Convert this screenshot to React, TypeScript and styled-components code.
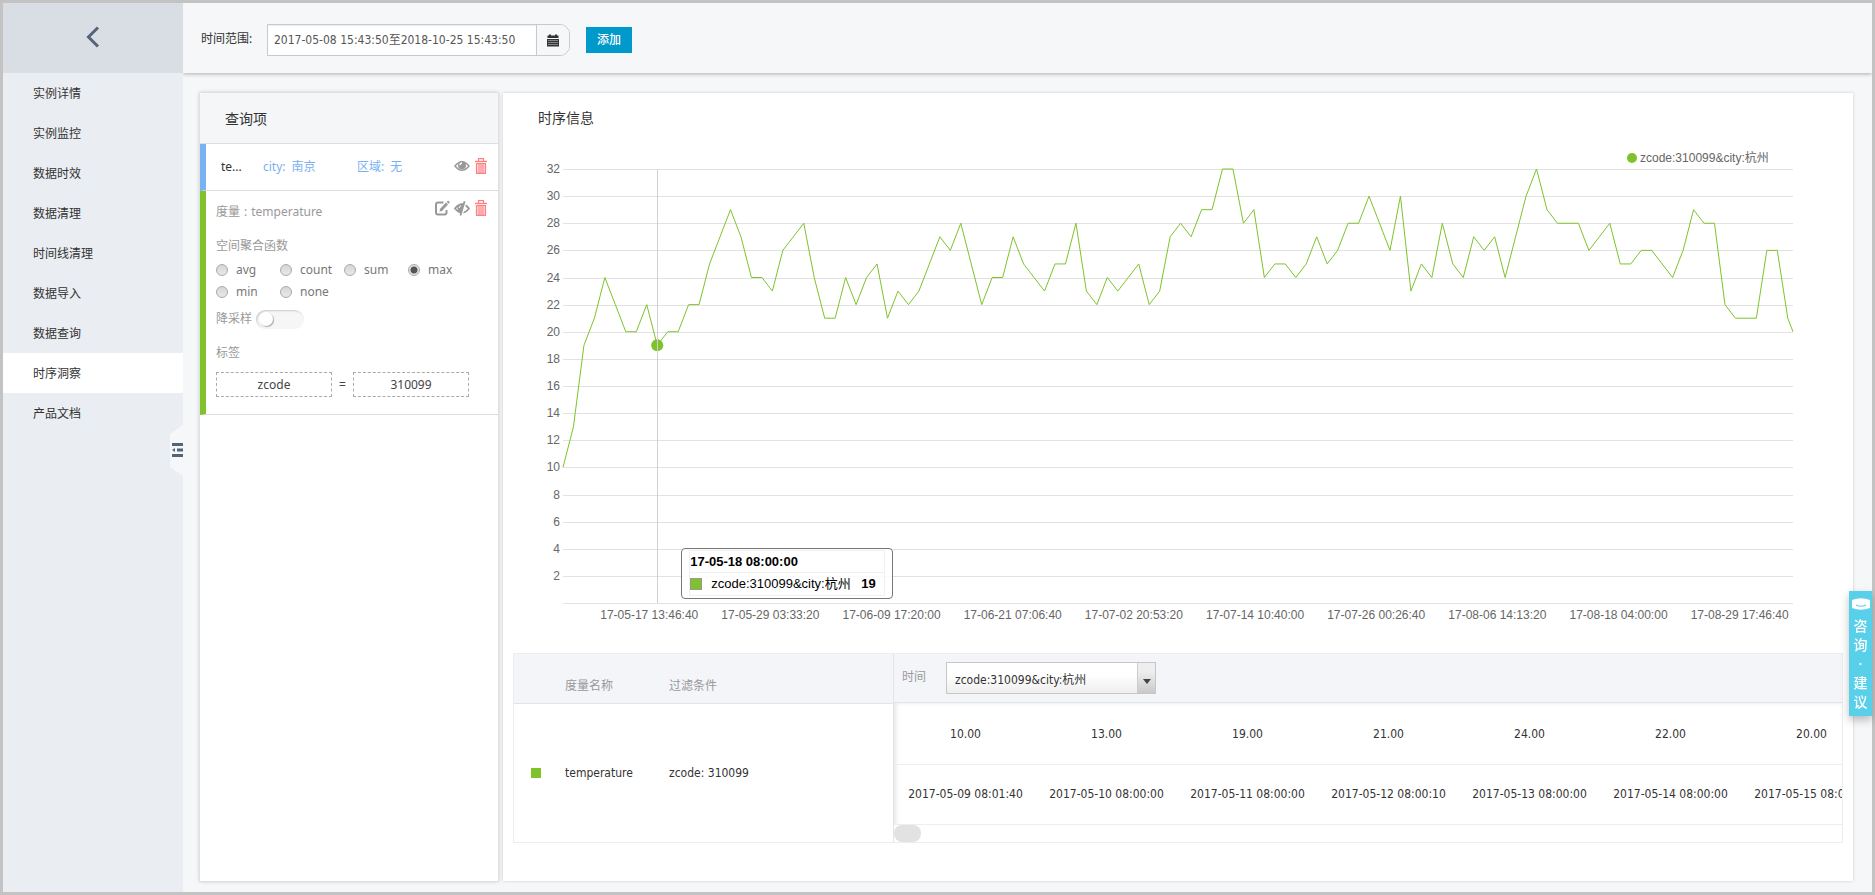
import React, { useLayoutEffect, useRef, useState } from "react";
import styled, { createGlobalStyle } from "styled-components";

const cjk = `"Noto Sans CJK SC", sans-serif`;
const fontBody = `"Noto Sans", ${cjk}`;
const fontData = `"DejaVu Sans Condensed", ${cjk}`;
const fontChart = `"Liberation Sans", ${cjk}`;
const green = "#7fc22c";

const GlobalStyle = createGlobalStyle`
  *, *::before, *::after { box-sizing: border-box; }
  body { margin: 0; background: #f5f7f9; font: 12px/20px ${fontBody}; color: #333; }
  button, input, select { font: inherit; color: inherit; margin: 0; }
  a { color: inherit; text-decoration: none; }
`;

/* ---------- page frame ---------- */

const Page = styled.div`
  display: flex;
  min-height: 100vh;
  border: 3px solid #c3c3c3;
  background: #f5f7f9;
`;

const Sidebar = styled.nav`
  position: relative;
  flex: 0 0 180px;
  background: #eaedf1;
`;

const BackButton = styled.button`
  display: flex;
  align-items: center;
  justify-content: center;
  width: 100%;
  height: 70px;
  padding: 0 0 2px;
  border: 0;
  background: #d9dee5;
`;

const NavList = styled.ul`
  margin: 0;
  padding: 0;
  list-style: none;
`;

const NavLink = styled.a<{ $active?: boolean }>`
  display: block;
  padding: 2px 30px 0;
  line-height: 38px;
  background: ${(p) => (p.$active ? "#fff" : "transparent")};
`;

const CollapseTab = styled.button`
  position: absolute;
  right: 0;
  top: 422px;
  width: 13px;
  height: 51px;
  padding: 0;
  border: 0;
  background: none;
  svg { display: block; }
`;

const Main = styled.main`
  flex: 1;
  min-width: 0;
  display: flex;
  flex-direction: column;
`;

const Toolbar = styled.form`
  display: flex;
  align-items: center;
  height: 70px;
  padding: 4px 17px 0 18px;
  background: #f5f7f9;
  box-shadow: 0 1px 4px rgba(0, 0, 0, 0.3);
  clip-path: inset(0 0 -8px 0);
`;

const RangeLabel = styled.label`
  width: 66px;
  padding-bottom: 2px;
`;

const RangeGroup = styled.div`
  display: flex;
  width: 303px;
  height: 32px;
  margin-right: 16px;
  border: 1px solid #c8c9cb;
  border-radius: 0 10px 10px 0;
  overflow: hidden;
`;

const RangeInput = styled.input`
  flex: 1;
  min-width: 0;
  padding: 0 6px;
  border: 0;
  background: #fff;
  box-shadow: inset 0 1px 1px rgba(0, 0, 0, 0.08);
  font-family: ${fontData};
  color: #555;
`;

const RangeButton = styled.button`
  display: flex;
  align-items: center;
  justify-content: center;
  width: 33px;
  padding: 0;
  border: 0;
  border-left: 1px solid #c8c9cb;
  background: #f5f7f9;
`;

const AddButton = styled.button`
  width: 46px;
  height: 26px;
  padding: 0;
  border: 0;
  background: #0099cc;
  color: #fff;
  font-weight: 500;
`;

const Content = styled.div`
  flex: 1;
  display: flex;
  gap: 5px;
  padding: 20px 19px 11px 17px;
`;

/* ---------- query panel ---------- */

const QueryPanel = styled.section`
  flex: 0 0 298px;
  background: #fff;
  box-shadow: 0 0 0 1px #dfe0e2, 0 0 4px rgba(0, 0, 0, 0.28);
`;

const QueryTitle = styled.h2`
  margin: 0;
  padding: 1px 25px 0;
  border-bottom: 1px solid #dcdfe2;
  background: #f5f6f8;
  font-size: 14px;
  font-weight: 400;
  line-height: 49px;
`;

const QueryRow = styled.article`
  display: flex;
  align-items: center;
  height: 47px;
  padding: 0 10px 0 15px;
  border-left: 6px solid #7ab1f1;
  border-bottom: 1px solid #dcdcdc;
`;

const QueryName = styled.span`
  width: 42px;
`;

const QueryTag = styled.span`
  display: flex;
  gap: 6px;
  width: 94px;
  color: #7ab1f1;
`;

const Actions = styled.div`
  display: flex;
  gap: 6px;
  margin-left: auto;
  padding-bottom: 3px;
`;

const IconButton = styled.button`
  display: flex;
  width: 14px;
  height: 16px;
  padding: 0;
  border: 0;
  background: none;
  svg { flex: none; }
`;

const QueryDetail = styled.article`
  padding: 9px 10px 17px;
  border-left: 6px solid ${green};
  border-bottom: 1px solid #dcdcdc;
  color: #999;
`;

const DetailHead = styled.header`
  display: flex;
  align-items: flex-start;
`;

const Metric = styled.span`
  display: flex;
  gap: 4px;
  padding-top: 2px;
`;

const Radios = styled.fieldset`
  margin: 14px 0 0;
  padding: 0;
  border: 0;
  min-width: 0;
`;

const RadioLegend = styled.legend`
  padding: 0 0 3px;
`;

const RadioGrid = styled.div`
  display: grid;
  grid-template-columns: repeat(4, 64px);
  grid-auto-rows: 22px;
`;

const RadioLabel = styled.label`
  display: flex;
  align-items: center;
  gap: 8px;
  color: #777;
`;

const Radio = styled.input`
  appearance: none;
  width: 12px;
  height: 12px;
  border: 1px solid #aaa;
  border-radius: 50%;
  background: linear-gradient(#d6d6d6, #e8e8e8);
  &:checked {
    background: radial-gradient(circle, #555 0 3px, #e4e4e4 4px);
  }
`;

const SwitchRow = styled.label`
  display: flex;
  align-items: center;
  gap: 4px;
  margin-top: 6px;
`;

const Switch = styled.input`
  appearance: none;
  display: flex;
  align-items: center;
  width: 48px;
  height: 19px;
  padding-left: 3px;
  border-radius: 10px;
  background: #f6f6f6;
  box-shadow: inset 1px 1px 2px rgba(0, 0, 0, 0.18);
  &::before {
    content: "";
    width: 14px;
    height: 14px;
    border-radius: 50%;
    background: #fff;
    box-shadow: 1px 1px 1px rgba(0, 0, 0, 0.3);
  }
  &:checked::before { margin-left: 27px; }
`;

const TagTitle = styled.p`
  margin: 14px 0 9px;
`;

const TagPair = styled.div`
  display: flex;
  align-items: center;
  color: #444;
`;

const TagInput = styled.input`
  width: 116px;
  height: 25px;
  padding: 0;
  border: 1px dashed #aaa;
  background: #fff;
  text-align: center;
`;

const Equals = styled.span`
  width: 21px;
  text-align: center;
`;

/* ---------- chart panel ---------- */

const ChartPanel = styled.section`
  flex: 1;
  min-width: 0;
  padding: 0 10px;
  background: #fff;
  box-shadow: 0 0 3px rgba(0, 0, 0, 0.18);
`;

const ChartTitle = styled.h2`
  margin: 0;
  padding: 15px 25px 12px;
  font-size: 14px;
  font-weight: 400;
  line-height: 20px;
`;

const ChartBox = styled.figure`
  position: relative;
  margin: 0;
  font-family: ${fontChart};
  svg { display: block; }
`;

const Tooltip = styled.div`
  position: absolute;
  top: 408px;
  width: 212px;
  padding: 1px 7px 2px;
  border: 1px solid #777;
  border-radius: 4px;
  background: rgba(255, 255, 255, 0.85);
  font-size: 13px;
  color: #000;
`;

const TipRow = styled.div`
  display: flex;
  align-items: center;
  width: 196px;
  height: 23px;
  border: 1px solid #f0f0f0;
  & + & { border-top: 0; }
`;

const TipSwatch = styled.span`
  width: 12px;
  height: 12px;
  margin-right: 9px;
  border: 1px solid #999;
  background: ${green};
`;

const TipName = styled.span`
  width: 150px;
`;

/* ---------- data area ---------- */

const line = "#e0e5ea";

const DataArea = styled.div`
  display: grid;
  grid-template-columns: 380px minmax(0, 1fr);
  margin-top: 13px;
  border: 1px solid #ebedf0;
  font-family: ${fontData};
`;

const MetricTable = styled.table`
  width: 100%;
  height: 100%;
  table-layout: fixed;
  border-collapse: collapse;
  border-right: 1px solid ${line};
  th, td { padding: 0; text-align: left; font-weight: 400; }
  th { height: 49px; padding-top: 16px; background: #f4f5f9; border-bottom: 1px solid ${line}; color: #999; }
`;

const MarkCol = styled.col`
  width: 51px;
`;

const NameCol = styled.col`
  width: 104px;
`;

const Swatch = styled.span`
  display: block;
  width: 10px;
  height: 10px;
  margin-left: 17px;
  background: ${green};
`;

const SeriesHead = styled.div`
  display: flex;
  align-items: flex-start;
  height: 49px;
  padding: 8px;
  border-bottom: 1px solid ${line};
  background: #f4f5f9;
`;

const SeriesLabel = styled.label`
  width: 44px;
  padding-top: 5px;
  color: #999;
`;

const SelectBox = styled.span`
  position: relative;
  width: 210px;
  height: 32px;
`;

const SeriesSelect = styled.select`
  appearance: none;
  display: block;
  width: 100%;
  height: 100%;
  padding: 3px 8px 0;
  border: 1px solid #c6c6c6;
  border-radius: 0;
  background: linear-gradient(#fff 40%, #eee);
`;

const SelectArrow = styled.span`
  position: absolute;
  right: 1px;
  top: 1px;
  bottom: 1px;
  display: flex;
  align-items: center;
  justify-content: center;
  width: 18px;
  padding-top: 6px;
  border-left: 1px solid #ccc;
  background: linear-gradient(#eee 30%, #c9c9c9);
  pointer-events: none;
`;

const SeriesScroll = styled.div`
  padding: 1px 0 0 1px;
  overflow: hidden;
  box-shadow: inset 4px 2px 4px -2px rgba(0, 0, 0, 0.1);
`;

const SeriesTable = styled.table`
  width: max-content;
  table-layout: fixed;
  border-collapse: collapse;
  td {
    width: 141px;
    height: 60px;
    padding: 0;
    border-bottom: 1px solid #eee;
    text-align: center;
    white-space: nowrap;
  }
`;

const Track = styled.div`
  height: 17px;
`;

const Thumb = styled.div`
  width: 27px;
  height: 17px;
  border-radius: 8px;
  background: #e2e2e2;
`;

const Feedback = styled.a`
  position: fixed;
  right: 3px;
  top: 591px;
  display: flex;
  flex-direction: column;
  align-items: center;
  width: 23px;
  height: 125px;
  padding: 7px 0 0;
  background: #58d0ea;
  box-shadow: 0 4px 8px rgba(0, 0, 0, 0.25);
  color: #fff;
  font-size: 14px;
  font-weight: 500;
  line-height: 19px;
  svg { flex: none; margin-bottom: 6px; }
`;

/* ---------- icons ---------- */

const EyeIcon = () => (
  <svg width="16" height="16" viewBox="0 0 16 16">
    <path d="M1 8Q8 -0.500 15 8Q8 16.500 1 8Z" fill="#fff" stroke="#999" strokeWidth="1.5" />
    <circle cx="8" cy="7.200" r="4" fill="#999" />
    <path d="M5.800 7.200Q6 5.200 8 5" fill="none" stroke="#fff" strokeWidth="1.300" />
  </svg>
);

const EyeOffIcon = () => (
  <svg width="16" height="16" viewBox="0 0 16 16">
    <path d="M1 8.500Q8 0 15 8.500Q8 17 1 8.500Z" fill="#fff" stroke="#999" strokeWidth="1.800" />
    <path d="M9.500 3.800A4.500 4.600 0 0 0 6.800 13Z" fill="#999" />
    <path d="M5.200 8Q5.400 6.200 7 5.600" fill="none" stroke="#fff" strokeWidth="1" />
    <path d="M12 1L7.600 16" stroke="#fff" strokeWidth="1.600" />
    <path d="M10.600 1.200L6.400 15.600" stroke="#999" strokeWidth="1.800" />
  </svg>
);

const EditIcon = () => (
  <svg width="16" height="16" viewBox="0 0 16 16" fill="none" stroke="#999" strokeWidth="2">
    <path d="M9.500 2.500H4Q2 2.500 2 4.500V12.500Q2 14.500 4 14.500H10.500Q12.500 14.500 12.500 12.500V10" />
    <path d="M6.500 10.500L13 3.500" strokeWidth="2.800" />
    <path d="M13.600 2.800L15 1.400" strokeWidth="2.600" />
    <path d="M5.200 12L7 8.800L8.400 10.200Z" fill="#999" stroke="none" />
  </svg>
);

const TrashIcon = () => (
  <svg width="14" height="16" viewBox="0 0 14 16" fill="none" stroke="#ff8080">
    <path d="M1 3.500H13" strokeWidth="1.400" />
    <path d="M4.500 3V0.700H9.500V3" strokeWidth="1.200" />
    <path d="M2.500 5.500V15.300H11.500V5.500Z" fill="#ffd5df" strokeWidth="1.200" />
    <path d="M5 6V15M7 6V15M9 6V15" strokeWidth="1" />
  </svg>
);

const CalendarIcon = () => (
  <svg width="12" height="13" viewBox="0 0 12 13">
    <path d="M0.500 1.500H2V0.500H4V1.500H8V0.500H10V1.500H11.500V4H0.500Z" fill="#333" />
    <path d="M0 5H12V12.500H0Z" fill="#333" />
    <path d="M1 6.500H11M1 8.500H11M1 10.500H11" stroke="#999" strokeWidth="0.800" />
  </svg>
);

/* ---------- chart ---------- */

const values = [
  10, 13, 19, 21, 24, 22, 20, 20, 22, 19, 20, 20, 22, 22, 25, 27, 29, 27, 24, 24,
  23, 26, 27, 28, 24, 21, 21, 24, 22, 24, 25, 21, 23, 22, 23, 25, 27, 26, 28, 25,
  22, 24, 24, 27, 25, 24, 23, 25, 25, 28, 23, 22, 24, 23, 24, 25, 22, 23, 27, 28,
  27, 29, 29, 32, 32, 28, 29, 24, 25, 25, 24, 25, 27, 25, 26, 28, 28, 30, 28, 26,
  30, 23, 25, 24, 28, 25, 24, 27, 26, 27, 24, 27, 30, 32, 29, 28, 28, 28, 26, 27,
  28, 25, 25, 26, 26, 25, 24, 26, 29, 28, 28, 22, 21, 21, 21, 26, 26, 21,
];
const lastValue = 20;
const totalDays = 117.5;

const ticks = [
  "17-05-17 13:46:40", "17-05-29 03:33:20", "17-06-09 17:20:00", "17-06-21 07:06:40",
  "17-07-02 20:53:20", "17-07-14 10:40:00", "17-07-26 00:26:40", "17-08-06 14:13:20",
  "17-08-18 04:00:00", "17-08-29 17:46:40",
];
const firstTickDay = 8.24;
const tickDays = 11.574;

const plot = { left: 50, right: 50, top: 29, bottom: 463, height: 500, max: 32 };
const seriesName = "zcode:310099&city:杭州";
const hovered = 9;

function TimeChart() {
  const box = useRef<HTMLElement>(null);
  const [width, setWidth] = useState(1330);

  useLayoutEffect(() => {
    const el = box.current;
    if (!el) return;
    const measure = () => setWidth(el.clientWidth);
    measure();
    const observer = new ResizeObserver(measure);
    observer.observe(el);
    return () => observer.disconnect();
  }, []);

  const right = width - plot.right;
  const x = (day: number) => plot.left + (day / totalDays) * (right - plot.left);
  const y = (v: number) => plot.bottom - (v / plot.max) * (plot.bottom - plot.top);
  const points = values.map((v, i) => `${x(i)},${y(v)}`).concat(`${x(totalDays)},${y(lastValue)}`);
  const grid = Array.from({ length: 17 }, (_, i) => i * 2);

  return (
    <ChartBox ref={box}>
      <svg width={width} height={plot.height} fontSize="12" fill="#666">
        {grid.map((v) => (
          <g key={v}>
            <path d={`M${plot.left} ${Math.round(y(v)) + 0.5}H${right}`} stroke="#e2e2e2" />
            {v > 0 && <text x={plot.left - 3} y={y(v) + 4} textAnchor="end">{v}</text>}
          </g>
        ))}
        {ticks.map((t, i) => (
          <text key={t} x={x(firstTickDay + i * tickDays)} y={479} textAnchor="middle">{t}</text>
        ))}
        <polyline points={points.join(" ")} fill="none" stroke={green} strokeWidth="1" />
        <circle cx={x(hovered)} cy={y(values[hovered])} r="6" fill={green} />
        <path d={`M${Math.floor(x(hovered)) + 0.5} ${plot.top}V${plot.bottom}`} stroke="#d0d0d0" />
        <circle cx={right - 161} cy={18} r="5" fill={green} />
        <text x={right - 153} y={22}>{seriesName}</text>
      </svg>
      <Tooltip style={{ left: x(hovered) + 24 }}>
        <TipRow><strong>17-05-18 08:00:00</strong></TipRow>
        <TipRow>
          <TipSwatch />
          <TipName>{seriesName}</TipName>
          <strong>19</strong>
        </TipRow>
      </Tooltip>
    </ChartBox>
  );
}

/* ---------- page ---------- */

const navItems = [
  "实例详情", "实例监控", "数据时效", "数据清理", "时间线清理",
  "数据导入", "数据查询", "时序洞察", "产品文档",
];

const aggregations = ["avg", "count", "sum", "max", "min", "none"];

const samples = [
  ["10.00", "2017-05-09 08:01:40"],
  ["13.00", "2017-05-10 08:00:00"],
  ["19.00", "2017-05-11 08:00:00"],
  ["21.00", "2017-05-12 08:00:10"],
  ["24.00", "2017-05-13 08:00:00"],
  ["22.00", "2017-05-14 08:00:00"],
  ["20.00", "2017-05-15 08:00:00"],
];

export default function App() {
  return (
    <>
      <GlobalStyle />
      <Page>
        <Sidebar>
          <BackButton type="button" aria-label="返回">
            <svg width="14" height="22" viewBox="0 0 14 22">
              <path d="M12 1.500L2.500 11L12 20.500" fill="none" stroke="#546478" strokeWidth="3" />
            </svg>
          </BackButton>
          <NavList>
            {navItems.map((item) => (
              <li key={item}>
                <NavLink href="#" $active={item === "时序洞察"}>{item}</NavLink>
              </li>
            ))}
          </NavList>
          <CollapseTab type="button" aria-label="收起菜单">
            <svg width="13" height="51" viewBox="0 0 13 51">
              <path d="M13 0V51L0 42V9Z" fill="#f5f7f9" />
              <path d="M2 19.500H13M7 25H13M2 30.500H13" stroke="#546478" strokeWidth="3" />
              <path d="M2 25L5 23V27Z" fill="#546478" />
            </svg>
          </CollapseTab>
        </Sidebar>

        <Main>
          <Toolbar>
            <RangeLabel htmlFor="range">时间范围:</RangeLabel>
            <RangeGroup>
              <RangeInput id="range" defaultValue="2017-05-08 15:43:50至2018-10-25 15:43:50" />
              <RangeButton type="button" aria-label="选择日期"><CalendarIcon /></RangeButton>
            </RangeGroup>
            <AddButton type="button">添加</AddButton>
          </Toolbar>

          <Content>
            <QueryPanel>
              <QueryTitle>查询项</QueryTitle>
              <QueryRow>
                <QueryName>te...</QueryName>
                <QueryTag><span>city:</span><span>南京</span></QueryTag>
                <QueryTag><span>区域:</span><span>无</span></QueryTag>
                <Actions>
                  <IconButton type="button" aria-label="显示"><EyeIcon /></IconButton>
                  <IconButton type="button" aria-label="删除"><TrashIcon /></IconButton>
                </Actions>
              </QueryRow>
              <QueryDetail>
                <DetailHead>
                  <Metric><span>度量</span><span>:</span><span>temperature</span></Metric>
                  <Actions>
                    <IconButton type="button" aria-label="编辑"><EditIcon /></IconButton>
                    <IconButton type="button" aria-label="隐藏"><EyeOffIcon /></IconButton>
                    <IconButton type="button" aria-label="删除"><TrashIcon /></IconButton>
                  </Actions>
                </DetailHead>
                <Radios>
                  <RadioLegend>空间聚合函数</RadioLegend>
                  <RadioGrid>
                    {aggregations.map((name) => (
                      <RadioLabel key={name}>
                        <Radio type="radio" name="aggregation" defaultChecked={name === "max"} />
                        {name}
                      </RadioLabel>
                    ))}
                  </RadioGrid>
                </Radios>
                <SwitchRow>
                  降采样
                  <Switch type="checkbox" role="switch" />
                </SwitchRow>
                <TagTitle>标签</TagTitle>
                <TagPair>
                  <TagInput aria-label="标签名" defaultValue="zcode" />
                  <Equals>=</Equals>
                  <TagInput aria-label="标签值" defaultValue="310099" />
                </TagPair>
              </QueryDetail>
            </QueryPanel>

            <ChartPanel>
              <ChartTitle>时序信息</ChartTitle>
              <TimeChart />
              <DataArea>
                <MetricTable>
                  <colgroup><MarkCol /><NameCol /><col /></colgroup>
                  <thead>
                    <tr><th /><th>度量名称</th><th>过滤条件</th></tr>
                  </thead>
                  <tbody>
                    <tr><td><Swatch /></td><td>temperature</td><td>zcode: 310099</td></tr>
                  </tbody>
                </MetricTable>
                <div>
                  <SeriesHead>
                    <SeriesLabel htmlFor="series">时间</SeriesLabel>
                    <SelectBox>
                      <SeriesSelect id="series"><option>{seriesName}</option></SeriesSelect>
                      <SelectArrow>
                        <svg width="8" height="5" viewBox="0 0 8 5"><path d="M0 0H8L4 5Z" fill="#444" /></svg>
                      </SelectArrow>
                    </SelectBox>
                  </SeriesHead>
                  <SeriesScroll>
                    <SeriesTable>
                      <tbody>
                        <tr>{samples.map(([value, time]) => <td key={time}>{value}</td>)}</tr>
                        <tr>{samples.map(([, time]) => <td key={time}>{time}</td>)}</tr>
                      </tbody>
                    </SeriesTable>
                  </SeriesScroll>
                  <Track><Thumb /></Track>
                </div>
              </DataArea>
            </ChartPanel>
          </Content>
        </Main>
      </Page>
      <Feedback href="#">
        <svg width="20" height="12" viewBox="0 0 20 12">
          <path d="M1 2Q10 -1.500 19 2V10Q10 13.500 1 10Z" fill="#fff" />
          <path d="M5 7Q10 9.500 15 7" fill="none" stroke="#58d0ea" strokeWidth="1.200" />
        </svg>
        <span>咨</span><span>询</span><span>·</span><span>建</span><span>议</span>
      </Feedback>
    </>
  );
}
